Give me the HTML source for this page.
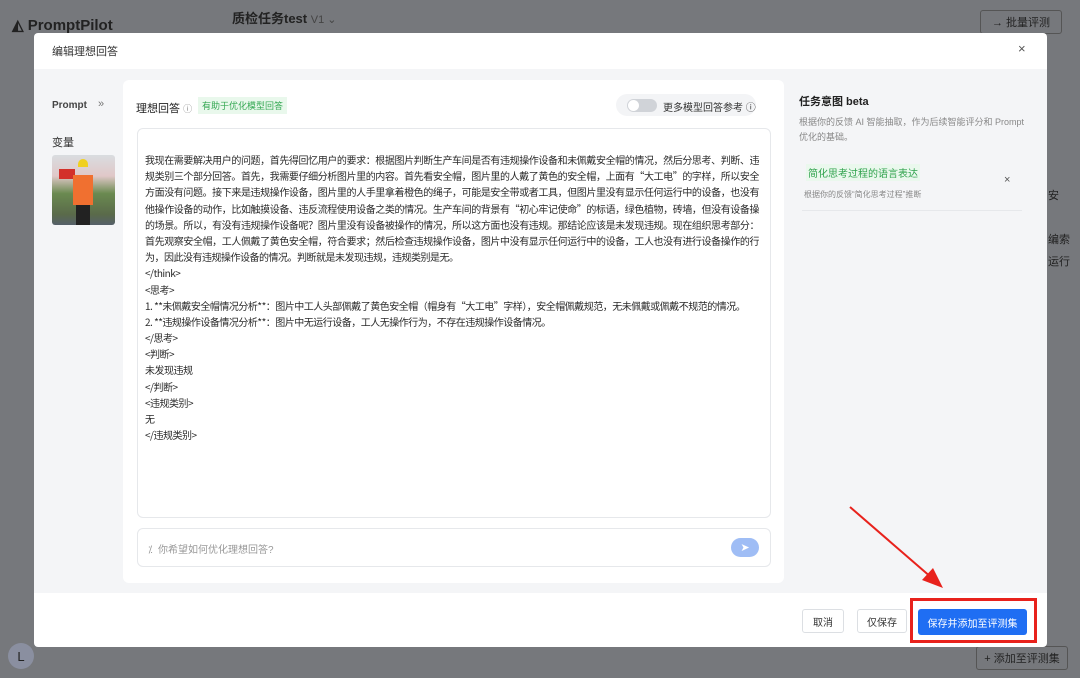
<!DOCTYPE html>
<html><head><meta charset="utf-8"><style>
*{box-sizing:border-box;margin:0;padding:0}
body{width:1080px;height:678px;overflow:hidden;background:#7b7d82;font-family:"Liberation Sans","Noto Sans CJK SC",sans-serif;position:relative;color:#333}
.a{position:absolute}
.btn{display:flex;align-items:center;justify-content:center}
.t div{height:16.2px;line-height:16.2px;white-space:nowrap;overflow:hidden}
.t .j{text-align:justify;text-align-last:justify;white-space:normal}
</style></head><body>
<div class="a" style="left:0;top:0;width:1080px;height:678px;background:#76787c"></div>
<div class="a" style="left:12px;top:16px;font-size:15px;font-weight:bold;color:#222">◭ PromptPilot</div>
<div class="a" style="left:232px;top:8px;font-size:13px;font-weight:bold;color:#222">质检任务test <span style="font-weight:normal;color:#444;font-size:11px">V1 ⌄</span></div>
<div class="a btn" style="left:980px;top:10px;width:82px;height:24px;border:1px solid #555;border-radius:3px;font-size:11px;color:#222">→ 批量评测</div>
<div class="a btn" style="left:976px;top:646px;width:92px;height:24px;border:1px solid #555;border-radius:3px;font-size:11px;color:#222">+ 添加至评测集</div>
<div class="a btn" style="left:8px;top:643px;width:26px;height:26px;border-radius:50%;background:#8a8fa0;color:#222;font-size:13px">L</div>
<div class="a" style="left:1048px;top:185px;font-size:11px;color:#222;line-height:22px">安<br><br>编索<br>运行</div>

<div class="a" style="left:34px;top:33px;width:1013px;height:614px;background:#fff;border-radius:4px;overflow:hidden">
 <div class="a" style="left:18px;top:10px;font-size:11px;color:#333">编辑理想回答</div>
 <div class="a" style="left:984px;top:8px;font-size:13px;color:#555">×</div>
 <div class="a" style="left:0;top:36px;width:1013px;height:524px;background:#f4f5f7"></div>
 <div class="a" style="left:18px;top:67px;font-size:10px;color:#444;font-weight:bold">Prompt</div>
 <div class="a" style="left:64px;top:65px;font-size:11px;color:#777">»</div>
 <div class="a" style="left:18px;top:101px;font-size:11px;color:#333">变量</div>
 <div class="a" style="left:18px;top:122px;width:63px;height:70px;border-radius:3px;background:linear-gradient(#d9dde0 0,#e0c8c8 30%,#6a8a50 55%,#5a6a4a 85%,#55606a 100%);overflow:hidden">
  <div class="a" style="left:7px;top:14px;width:16px;height:10px;background:#d3302a"></div>
  <div class="a" style="left:26px;top:4px;width:10px;height:8px;border-radius:5px 5px 0 0;background:#f0d020"></div>
  <div class="a" style="left:21px;top:20px;width:20px;height:30px;background:#f07030"></div>
  <div class="a" style="left:24px;top:50px;width:14px;height:20px;background:#222"></div>
 </div>

 <div class="a" style="left:89px;top:47px;width:661px;height:503px;background:#fff;border-radius:6px"></div>
 <div class="a" style="left:102px;top:67px;font-size:11px;color:#222">理想回答 <span style="color:#888;font-size:9px">ⓘ</span></div>
 <div class="a" style="left:164px;top:64px;padding:2px 4px;background:#e9f8ec;color:#35a853;font-size:9px">有助于优化模型回答</div>
 <div class="a" style="left:582px;top:61px;width:140px;height:22px;background:#f3f4f6;border-radius:11px"></div>
 <div class="a" style="left:593px;top:66px;width:30px;height:13px;background:#d0d3d8;border-radius:7px"><div style="margin:1px;width:11px;height:11px;border-radius:50%;background:#fff"></div></div>
 <div class="a" style="left:629px;top:66px;font-size:10px;color:#333">更多模型回答参考 ⓘ</div>
 <div class="a" style="left:103px;top:95px;width:634px;height:390px;border:1px solid #e6e8eb;border-radius:6px"></div>
 <div class="a t" style="left:111px;top:119px;width:614px;font-size:10px;color:#2a2a2a;letter-spacing:-0.5px;font-family:'Noto Sans CJK SC',sans-serif">
  <div class="j">我现在需要解决用户的问题，首先得回忆用户的要求：根据图片判断生产车间是否有违规操作设备和未佩戴安全帽的情况，然后分思考、判断、违</div>
  <div class="j">规类别三个部分回答。首先，我需要仔细分析图片里的内容。首先看安全帽，图片里的人戴了黄色的安全帽，上面有“大工电”的字样，所以安全帽</div>
  <div class="j">方面没有问题。接下来是违规操作设备，图片里的人手里拿着橙色的绳子，可能是安全带或者工具，但图片里没有显示任何运行中的设备，也没有</div>
  <div class="j">他操作设备的动作，比如触摸设备、违反流程使用设备之类的情况。生产车间的背景有“初心牢记使命”的标语，绿色植物，砖墙，但没有设备操作</div>
  <div class="j">的场景。所以，有没有违规操作设备呢？图片里没有设备被操作的情况，所以这方面也没有违规。那结论应该是未发现违规。现在组织思考部分：</div>
  <div class="j">首先观察安全帽，工人佩戴了黄色安全帽，符合要求；然后检查违规操作设备，图片中没有显示任何运行中的设备，工人也没有进行设备操作的行</div>
  <div>为，因此没有违规操作设备的情况。判断就是未发现违规，违规类别是无。</div>
  <div>&lt;/think&gt;</div>
  <div>&lt;思考&gt;</div>
  <div>1. **未佩戴安全帽情况分析**：图片中工人头部佩戴了黄色安全帽（帽身有“大工电”字样），安全帽佩戴规范，无未佩戴或佩戴不规范的情况。</div>
  <div>2. **违规操作设备情况分析**：图片中无运行设备，工人无操作行为，不存在违规操作设备情况。</div>
  <div>&lt;/思考&gt;</div>
  <div>&lt;判断&gt;</div>
  <div>未发现违规</div>
  <div>&lt;/判断&gt;</div>
  <div>&lt;违规类别&gt;</div>
  <div>无</div>
  <div>&lt;/违规类别&gt;</div>
 </div>
 <div class="a" style="left:103px;top:495px;width:634px;height:39px;border:1px solid #e6e8eb;border-radius:6px"></div>
 <div class="a" style="left:114px;top:508px;font-size:10px;color:#999">⁒&nbsp; 你希望如何优化理想回答?</div>
 <div class="a btn" style="left:697px;top:505px;width:28px;height:19px;border-radius:10px;background:#9fbdf5;color:#fff;font-size:11px">➤</div>

 <div class="a" style="left:765px;top:60px;font-size:11px;color:#222;font-weight:bold">任务意图 beta</div>
 <div class="a" style="left:765px;top:82px;width:230px;font-size:9px;color:#888;line-height:15px">根据你的反馈 AI 智能抽取，作为后续智能评分和 Prompt 优化的基础。</div>
 <div class="a" style="left:768px;top:121px;width:220px;height:57px;border-bottom:1px solid #e6e8eb"></div>
 <div class="a" style="left:772px;top:131px;padding:1px 2px;background:#eaf8ed;color:#2fa24c;font-size:10px">简化思考过程的语言表达</div>
 <div class="a" style="left:970px;top:141px;font-size:11px;color:#555">×</div>
 <div class="a" style="left:770px;top:156px;font-size:8px;color:#888">根据你的反馈“简化思考过程”推断</div>

 <div class="a btn" style="left:768px;top:576px;width:42px;height:24px;border:1px solid #dcdfe3;border-radius:3px;font-size:10px;color:#333">取消</div>
 <div class="a btn" style="left:823px;top:576px;width:50px;height:24px;border:1px solid #dcdfe3;border-radius:3px;font-size:10px;color:#333">仅保存</div>
 <div class="a btn" style="left:884px;top:576px;width:109px;height:26px;background:#1f6ef3;border-radius:3px;font-size:10px;color:#fff">保存并添加至评测集</div>
</div>
<div class="a" style="left:910px;top:598px;width:127px;height:45px;border:3px solid #e8221c"></div>
<svg class="a" style="left:0;top:0" width="1080" height="678"><line x1="850" y1="507" x2="932" y2="578" stroke="#e8221c" stroke-width="2"/><polygon points="943,588 922,580 933,568" fill="#e8221c"/></svg>
</body></html>
